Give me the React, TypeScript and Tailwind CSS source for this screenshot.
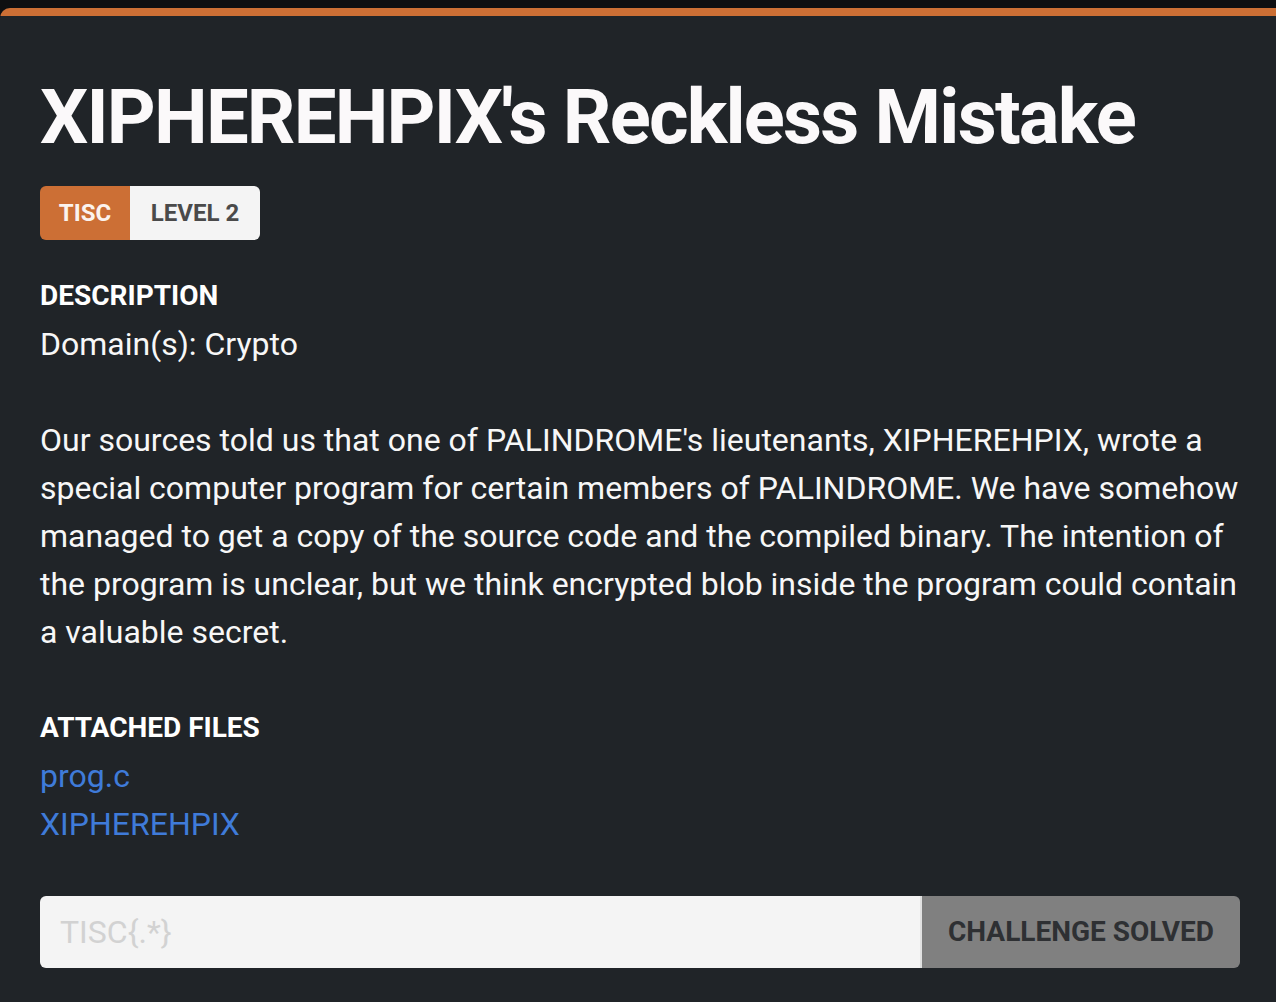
export default function App() {
  const head = { fontFamily: 'Roboto, "Noto Sans", sans-serif' };
  const body = { fontFamily: 'Roboto, "Noto Sans", sans-serif' };
  return (
    <div className="w-[1276px] h-[1002px] bg-[#0e0f11] overflow-hidden pt-[8px]">
      <div className="h-full rounded-tl-[10px] bg-[#202428] overflow-hidden">
        <div className="h-[8px] bg-[#cc6f35]" />
        <div className="pl-[40px] pr-[36px]">
          <h1
            className="mt-[53px] text-[76px] leading-[96px] font-bold text-[#fbf9fa] tracking-[-1.8px] whitespace-nowrap"
            style={head}
          >
            XIPHEREHPIX's Reckless Mistake
          </h1>
          <div className="mt-[21px] flex h-[54px] w-fit rounded-[6px] overflow-hidden text-[24px] font-bold" style={head}>
            <div className="w-[90px] bg-[#cc6f35] text-[#fbf3ee] flex items-center justify-center">TISC</div>
            <div className="w-[130px] bg-[#f4f4f4] text-[#4a4a4a] flex items-center justify-center">LEVEL 2</div>
          </div>
          <div className="mt-[32px] text-[32px] leading-[48px] text-[#f7f7f7]" style={body}>
            <div className="font-bold text-[28px] text-white" style={head}>DESCRIPTION</div>
            <div>Domain(s): Crypto</div>
            <div className="h-[48px]" />
            <p>
              Our sources told us that one of PALINDROME's lieutenants, XIPHEREHPIX, wrote a special computer program for
              certain members of PALINDROME. We have somehow managed to get a copy of the source code and the compiled
              binary. The intention of the program is unclear, but we think encrypted blob inside the program could contain
              a valuable secret.
            </p>
            <div className="h-[48px]" />
            <div className="font-bold text-[28px] text-white" style={head}>ATTACHED FILES</div>
            <div className="text-[#3f7bd9]">prog.c</div>
            <div className="text-[#3f7bd9]">XIPHEREHPIX</div>
          </div>
          <div className="mt-[48px] flex h-[72px] w-[1200px]">
            <div className="flex-1 bg-[#f4f4f4] rounded-l-[6px] border-r-2 border-[#e2e2e2] flex items-center pl-[20px] text-[32px] text-[#d2d2d2]" style={body}>
              TISC{'{.*}'}
            </div>
            <div className="w-[318px] bg-[#808080] rounded-r-[6px] flex items-center justify-center text-[28px] font-bold text-[#2e3033]" style={head}>
              CHALLENGE SOLVED
            </div>
          </div>
        </div>
      </div>
    </div>
  );
}
